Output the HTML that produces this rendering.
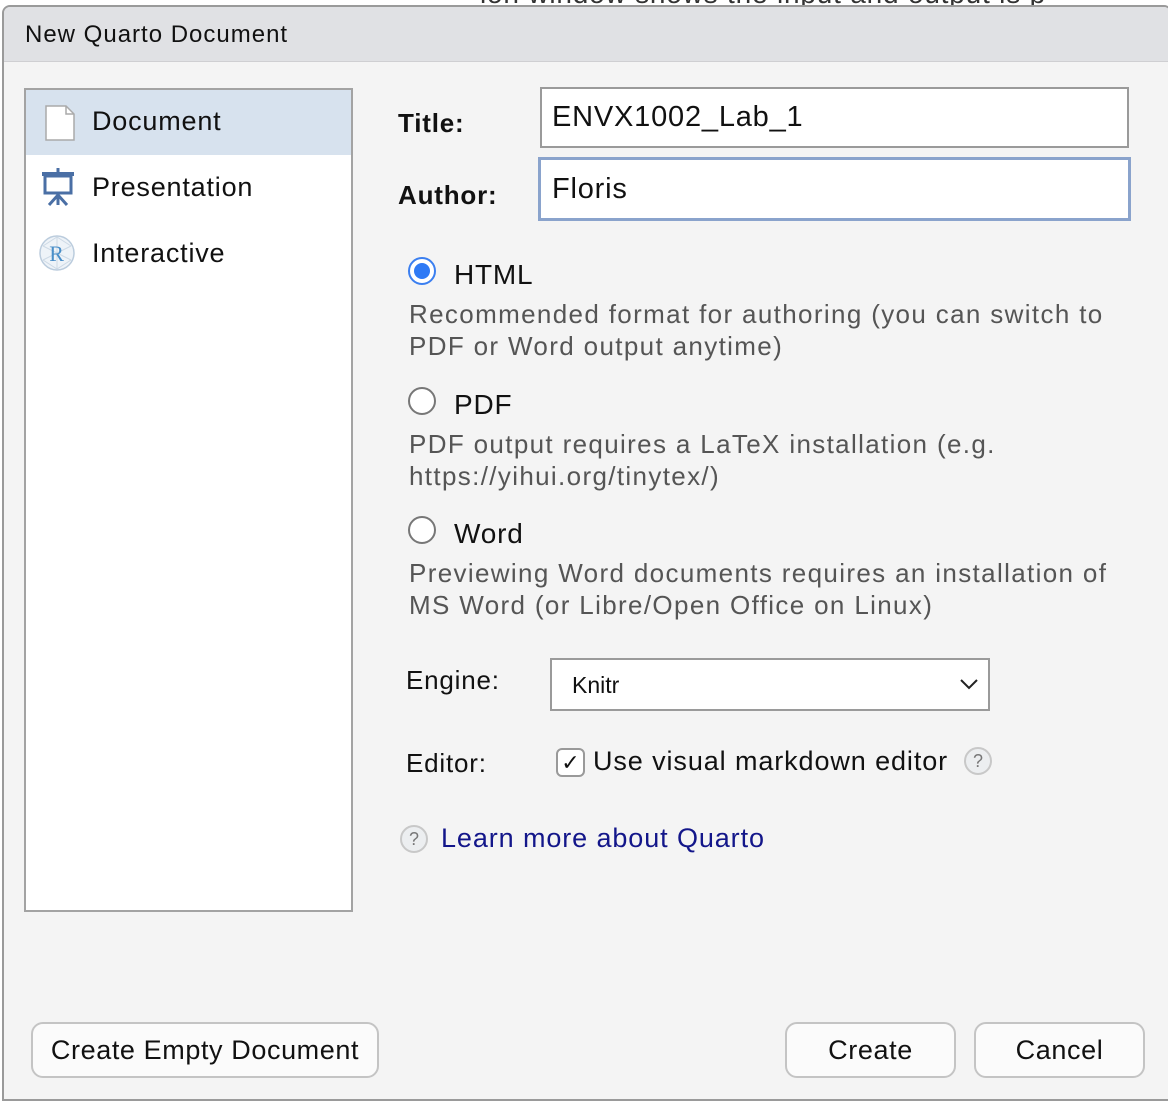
<!DOCTYPE html>
<html><head><meta charset="utf-8"><style>
*{box-sizing:border-box;margin:0;padding:0}
body{width:1168px;height:1102px;background:#fff;font-family:"Liberation Sans",sans-serif;color:#111;position:relative;overflow:hidden;letter-spacing:0.8px}
.a{position:absolute;white-space:nowrap}
.dlg{position:absolute;left:2px;top:5px;width:1170px;height:1096px;background:#f4f4f4;border:2px solid #9a9a9a;border-radius:8px 8px 0 0;overflow:hidden}
.tb{position:absolute;left:0;top:0;right:0;height:55px;background:#e0e1e4;border-bottom:1px solid #cfcfd2}
.list{position:absolute;left:24px;top:88px;width:329px;height:824px;background:#fff;border:2px solid #a3a3a3}
.inp{position:absolute;background:#fff;border:2px solid #9a9a9a}
.btn{position:absolute;background:#fbfbfb;border:2px solid #c4c4c4;border-radius:12px;font-size:27px;text-align:center;line-height:52px;letter-spacing:0.6px}
.desc{font-size:26px;color:#555;line-height:32px;letter-spacing:1.35px}
.radio{position:absolute;width:28px;height:28px;border-radius:50%;border:2px solid #777;background:#fff}
.q{position:absolute;width:28px;height:28px;border-radius:50%;border:2px solid #c8c8c8;background:#eceef0;color:#777;font-size:18px;text-align:center;line-height:24px;letter-spacing:0}
</style></head><body>
<div class="a" style="left:480px;top:-22px;font-size:28px;color:#333">ion window shows the input and output is p</div>
<div class="dlg">
 <div class="tb"></div>
 <div class="a" style="left:21px;top:14px;font-size:24px;letter-spacing:1px">New Quarto Document</div>
</div>
<div class="list">
 <div style="position:absolute;left:0;top:0;width:325px;height:65px;background:#d7e2ee"></div>
 <svg class="a" style="left:18px;top:15px" width="32" height="36" viewBox="0 0 32 36"><path d="M2 1h20l8 8v26H2z" fill="#fff" stroke="#aaa" stroke-width="1.5"/><path d="M22 1v8h8" fill="none" stroke="#aaa" stroke-width="1.5"/></svg>
 <div class="a" style="left:66px;top:16px;font-size:27px">Document</div>
 <svg class="a" style="left:14px;top:78px" width="36" height="38" viewBox="0 0 36 38"><rect x="2" y="4" width="32" height="4" fill="#4a6fa5"/><rect x="5" y="8" width="26" height="17" fill="#fff" stroke="#4a6fa5" stroke-width="3"/><path d="M18 25v12M18 27l-9 10M18 27l9 10M18 0v4" stroke="#4a6fa5" stroke-width="3" fill="none"/></svg>
 <div class="a" style="left:66px;top:82px;font-size:27px">Presentation</div>
 <svg class="a" style="left:12px;top:144px" width="38" height="38" viewBox="0 0 38 38"><circle cx="19" cy="19" r="17" fill="#eef3f8" stroke="#bcd" stroke-width="1.5"/><path d="M5 12l14-9 14 9M5 26l14 9 14-9M19 3v32M5 12l28 14M33 12L5 26" stroke="#cdd9e5" fill="none"/><text x="19" y="27" font-size="22" text-anchor="middle" fill="#4a8fc9" font-family="Liberation Serif">R</text></svg>
 <div class="a" style="left:66px;top:148px;font-size:27px">Interactive</div>
</div>
<div class="a" style="left:398px;top:108px;font-size:26px;font-weight:bold">Title:</div>
<div class="inp" style="left:540px;top:87px;width:589px;height:61px"></div>
<div class="a" style="left:552px;top:101px;font-size:29px">ENVX1002_Lab_1</div>
<div class="a" style="left:398px;top:180px;font-size:26px;font-weight:bold">Author:</div>
<div class="inp" style="left:538px;top:157px;width:593px;height:64px;border:3px solid #8aa3cc"></div>
<div class="a" style="left:552px;top:173px;font-size:29px">Floris</div>

<div class="radio" style="left:408px;top:257px;border-color:#3b7ff0"><div style="position:absolute;left:4px;top:4px;width:16px;height:16px;border-radius:50%;background:#2f7af5"></div></div>
<div class="a" style="left:454px;top:259px;font-size:28px">HTML</div>
<div class="a desc" style="left:409px;top:298px">Recommended format for authoring (you can switch to<br>PDF or Word output anytime)</div>
<div class="radio" style="left:408px;top:387px"></div>
<div class="a" style="left:454px;top:389px;font-size:28px">PDF</div>
<div class="a desc" style="left:409px;top:428px">PDF output requires a LaTeX installation (e.g.<br>https://yihui.org/tinytex/)</div>
<div class="radio" style="left:408px;top:516px"></div>
<div class="a" style="left:454px;top:518px;font-size:28px">Word</div>
<div class="a desc" style="left:409px;top:557px">Previewing Word documents requires an installation of<br>MS Word (or Libre/Open Office on Linux)</div>

<div class="a" style="left:406px;top:665px;font-size:26px">Engine:</div>
<div class="inp" style="left:550px;top:658px;width:440px;height:53px"></div>
<div class="a" style="left:572px;top:672px;font-size:23px;letter-spacing:0">Knitr</div>
<svg class="a" style="left:960px;top:678px" width="18" height="12"><path d="M1 2l8 8 8-8" stroke="#222" stroke-width="2" fill="none"/></svg>
<div class="a" style="left:406px;top:748px;font-size:26px">Editor:</div>
<div class="a" style="left:556px;top:748px;width:29px;height:29px;border:2px solid #999;border-radius:6px;background:#fff;font-size:22px;text-align:center;line-height:25px;letter-spacing:0">✓</div>
<div class="a" style="left:593px;top:746px;font-size:27px;letter-spacing:0.9px">Use visual markdown editor</div>
<div class="q" style="left:964px;top:747px">?</div>
<div class="q" style="left:400px;top:825px">?</div>
<div class="a" style="left:441px;top:823px;font-size:27px;color:#13168a;letter-spacing:0.9px">Learn more about Quarto</div>

<div class="btn" style="left:31px;top:1022px;width:348px;height:56px">Create Empty Document</div>
<div class="btn" style="left:785px;top:1022px;width:171px;height:56px">Create</div>
<div class="btn" style="left:974px;top:1022px;width:171px;height:56px">Cancel</div>
</body></html>
